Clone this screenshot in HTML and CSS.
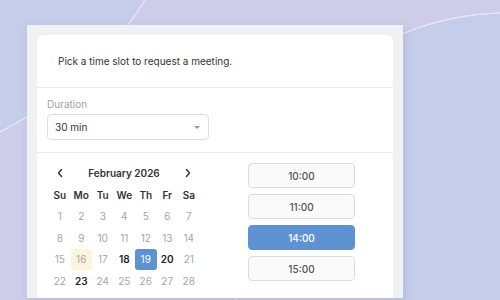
FILE: index.html
```html
<!DOCTYPE html>
<html lang="en">
<head>
<meta charset="utf-8">
<title>Request a meeting</title>
<link rel="stylesheet" href="styles.css">
</head>
<body>
<div class="panel">
  <div class="card">
    <div class="intro">Pick a time slot to request a meeting.</div>
    <div class="duration">
      <label class="field-label">Duration</label>
      <div class="select">
        <span>30 min</span>
        <span class="caret"></span>
      </div>
    </div>
    <div class="booking">
      <div class="calendar">
        <div class="cal-nav">
          <span class="nav-btn"><svg width="8" height="10" viewBox="0 0 8 10"><path d="M5.5 1.5 L2.5 5 L5.5 8.5" fill="none" stroke="#333" stroke-width="1.4" stroke-linecap="round" stroke-linejoin="round"/></svg></span>
          <span class="cal-title">February 2026</span>
          <span class="nav-btn"><svg width="8" height="10" viewBox="0 0 8 10"><path d="M2.5 1.5 L5.5 5 L2.5 8.5" fill="none" stroke="#333" stroke-width="1.4" stroke-linecap="round" stroke-linejoin="round"/></svg></span>
        </div>
        <div class="cal-grid">
          <span class="wd">Su</span><span class="wd">Mo</span><span class="wd">Tu</span><span class="wd">We</span><span class="wd">Th</span><span class="wd">Fr</span><span class="wd">Sa</span>
          <span class="day">1</span><span class="day">2</span><span class="day">3</span><span class="day">4</span><span class="day">5</span><span class="day">6</span><span class="day">7</span>
          <span class="day">8</span><span class="day">9</span><span class="day">10</span><span class="day">11</span><span class="day">12</span><span class="day">13</span><span class="day">14</span>
          <span class="day">15</span><span class="day today">16</span><span class="day">17</span><span class="day avail">18</span><span class="day selected">19</span><span class="day avail">20</span><span class="day">21</span>
          <span class="day">22</span><span class="day avail">23</span><span class="day">24</span><span class="day">25</span><span class="day">26</span><span class="day">27</span><span class="day">28</span>
        </div>
      </div>
      <div class="slots">
        <button class="slot">10:00</button>
        <button class="slot">11:00</button>
        <button class="slot active">14:00</button>
        <button class="slot">15:00</button>
      </div>
    </div>
  </div>
</div>
</body>
</html>
```

FILE: styles.css
```css
* { box-sizing: border-box; }

html, body {
  margin: 0;
  height: 100%;
}

body {
  font-family: Inter, "Noto Sans", sans-serif;
  background:
    radial-gradient(circle 362px at -162px -192px, #c6cdea 0, #c6cdea 361px, rgba(255,255,255,0.45) 361.5px, rgba(255,255,255,0.45) 362.5px, transparent 363px),
    radial-gradient(circle 271px at 507px 284px, #c6cdea 0, #c6cdea 270px, rgba(255,255,255,0.45) 270.5px, rgba(255,255,255,0.45) 271.5px, transparent 272px),
    #cdcdea;
  background-repeat: no-repeat;
  padding: 25px 0 2px 27px;
  overflow: hidden;
}

.panel {
  width: 376px;
  height: 273px;
  background: #f0f1f3;
  padding: 10px 10px 0;
  box-shadow: 2px 2px 8px rgba(90, 100, 150, 0.18);
}

.card {
  background: #fff;
  border-radius: 6px 6px 0 0;
  height: 100%;
}

.intro {
  padding: 16px 21px;
  font-size: 10px;
  line-height: 20px;
  color: #333;
  border-bottom: 1px solid #ececee;
}

.duration {
  padding: 8px 10px 12px;
  border-bottom: 1px solid #ececee;
  display: flex;
  flex-direction: column;
  gap: 2px;
}

.field-label {
  font-size: 10px;
  line-height: 16px;
  color: #a0a0a6;
}

.select {
  width: 162px;
  height: 26px;
  border: 1px solid #dcdfe4;
  border-radius: 4px;
  display: flex;
  align-items: center;
  justify-content: space-between;
  padding: 0 8px 0 7px;
  font-size: 10px;
  color: #333;
}

.caret {
  width: 0;
  height: 0;
  border-left: 3px solid transparent;
  border-right: 3px solid transparent;
  border-top: 3px solid #999;
}

.booking {
  display: flex;
  padding: 9px 12px 0;
  gap: 49px;
}

.calendar {
  width: 150px;
}

.cal-nav {
  display: flex;
  align-items: center;
  justify-content: space-between;
  height: 22px;
}

.nav-btn {
  width: 21.5px;
  display: flex;
  justify-content: center;
  align-items: center;
}

.cal-title {
  font-size: 10px;
  font-weight: 600;
  color: #333;
}

.cal-grid {
  display: grid;
  grid-template-columns: repeat(7, 21.5px);
  grid-auto-rows: 21.5px;
}

.wd, .day {
  display: flex;
  align-items: center;
  justify-content: center;
  font-size: 10px;
}

.wd {
  font-weight: 600;
  color: #333;
}

.day {
  color: #a5a5a8;
  border-radius: 3px;
}

.day.avail {
  color: #222;
  font-weight: 600;
}

.day.today {
  background: #fbf5dc;
}

.day.selected {
  background: #5f92d2;
  color: #fff;
}

.slots {
  display: flex;
  flex-direction: column;
  gap: 6px;
  padding-top: 1px;
}

.slot {
  width: 107px;
  height: 25px;
  background: #fafafa;
  border: 1px solid #dcdcde;
  border-radius: 4px;
  font-family: Inter, "Noto Sans", sans-serif;
  font-size: 10px;
  font-weight: 500;
  color: #555;
  padding: 0;
}

.slot.active {
  background: #5f92d2;
  border-color: #5f92d2;
  color: #fff;
}
```
